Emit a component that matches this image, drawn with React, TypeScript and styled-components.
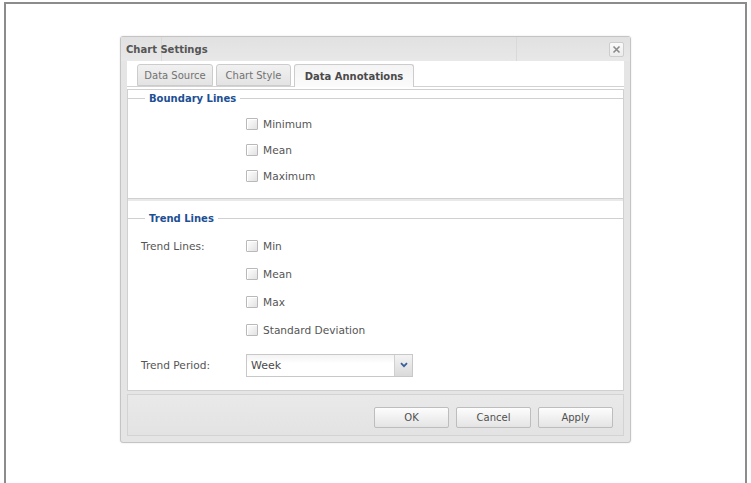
import styled, { createGlobalStyle } from 'styled-components';

const GlobalStyle = createGlobalStyle`
  html, body {
    margin: 0;
    padding: 0;
    background: #fff;
  }
  * {
    box-sizing: border-box;
  }
  body {
    font-family: 'DejaVu Sans', 'Liberation Sans', sans-serif;
    color: #4a4a4a;
  }
`;

const Frame = styled.div`
  margin: 2px 4px 0;
  height: 481px;
  border: 2px solid #8c8c8c;
  border-bottom: 0;
  display: flex;
  justify-content: center;
  align-items: flex-start;
  padding-top: 32px;
`;

const Dialog = styled.div`
  width: 511px;
  border: 1px solid #c4c4c4;
  border-radius: 3px;
  background: #e5e5e5;
  box-shadow: 0 0 2px rgba(0, 0, 0, 0.12);
  padding: 0 6px 6px 6px;
  display: flex;
  flex-direction: column;
`;

const Header = styled.div`
  height: 24px;
  margin: 0 -6px;
  padding: 0 6px 0 5px;
  display: flex;
  align-items: center;
  justify-content: space-between;
  background:
    linear-gradient(#d9d9d9, #d9d9d9) 40px 0 / 1px 100% no-repeat,
    linear-gradient(#d9d9d9, #d9d9d9) 395px 0 / 1px 100% no-repeat,
    linear-gradient(#e1e1e1, #e8e8e8);
`;

const Title = styled.span`
  font-size: 10px;
  font-weight: bold;
  color: #555;
`;

const CloseButton = styled.button`
  width: 15px;
  height: 15px;
  padding: 0;
  margin-top: 1px;
  border: 1px solid #cdcdcd;
  border-radius: 2px;
  background: linear-gradient(#fafafa, #ececec);
  display: flex;
  align-items: center;
  justify-content: center;
`;

const TabStrip = styled.div`
  height: 26px;
  padding: 2px 0 0 10px;
  background: #fff;
  border-bottom: 1px solid #d2d2d2;
  display: flex;
  align-items: flex-end;
  gap: 3px;
`;

const Tab = styled.div<{ $active?: boolean; $w: number }>`
  width: ${(p) => p.$w}px;
  height: ${(p) => (p.$active ? '23px' : '22px')};
  margin-bottom: ${(p) => (p.$active ? '-1px' : '0')};
  border: 1px solid #cccccc;
  border-bottom: ${(p) => (p.$active ? '0' : '1px solid #cccccc')};
  border-radius: 3px 3px 0 0;
  background: ${(p) =>
    p.$active
      ? 'linear-gradient(#f4f4f4, #fbfbfb)'
      : 'linear-gradient(#f1f1f1, #e3e3e3)'};
  font-size: 10px;
  font-weight: ${(p) => (p.$active ? 'bold' : 'normal')};
  color: ${(p) => (p.$active ? '#4a4a4a' : '#727272')};
  display: flex;
  align-items: center;
  justify-content: center;
`;

const StripSpacer = styled.div`
  height: 2px;
  background: #fff;
`;

const Panel = styled.div`
  height: 302px;
  background: #fff;
  border: 1px solid #d0d0d0;
  display: flex;
  flex-direction: column;
`;

const Group = styled.div<{ $closed?: boolean }>`
  padding-top: 1px;
  padding-bottom: ${(p) => (p.$closed ? '9px' : '0')};
  margin-top: ${(p) => (p.$closed ? '0' : '11px')};
  border-bottom: ${(p) => (p.$closed ? '1px solid #d0d0d0' : '0')};
  box-shadow: ${(p) => (p.$closed ? '0 2px 0 #e9e9e9' : 'none')};
`;

const GroupTitle = styled.div`
  height: 14px;
  display: flex;
  align-items: center;
  font-size: 10px;
  font-weight: bold;
  color: #1d4f94;

  &::before,
  &::after {
    content: '';
    height: 1px;
    background: #d0d0d0;
  }
  &::before {
    width: 17px;
  }
  &::after {
    flex: 1;
  }

  span {
    padding: 0 4px;
  }
`;

const Rows = styled.div<{ $top: number }>`
  margin-top: ${(p) => p.$top}px;
`;

const FormRow = styled.div<{ $h: number }>`
  height: ${(p) => p.$h}px;
  padding-left: 13px;
  display: grid;
  grid-template-columns: 105px auto;
  align-items: center;
`;

const FieldLabel = styled.span`
  font-size: 10.6px;
  color: #555;
`;

const CheckItem = styled.label`
  display: flex;
  align-items: center;
  gap: 5px;
  font-size: 10.6px;
  color: #555;
`;

const CheckBox = styled.span`
  width: 12px;
  height: 12px;
  border: 1px solid #b9b9b9;
  border-radius: 1px;
  background: linear-gradient(135deg, #ffffff, #e2e2e2);
  box-shadow: inset 1px 1px 0 #fff;
`;

const Combo = styled.div`
  width: 167px;
  height: 23px;
  border: 1px solid #c8c8c8;
  background: linear-gradient(#f3f3f3, #ffffff 40%);
  display: flex;
  align-items: stretch;
`;

const ComboText = styled.span`
  flex: 1;
  padding-left: 4px;
  font-size: 11px;
  color: #4a4a4a;
  display: flex;
  align-items: center;
`;

const ComboTrigger = styled.span`
  width: 18px;
  border-left: 1px solid #d0d0d0;
  background: linear-gradient(#f3f3f3, #dadada);
  display: flex;
  align-items: center;
  justify-content: center;
`;

const Footer = styled.div`
  margin-top: 3px;
  height: 42px;
  border: 1px solid #d3d3d3;
  background: linear-gradient(#e9e9e9, #e3e3e3);
  padding: 12px 10px 0 0;
  display: flex;
  justify-content: flex-end;
  align-items: flex-start;
  gap: 7px;
`;

const Button = styled.button`
  width: 75px;
  height: 21px;
  border: 1px solid #bdbdbd;
  border-radius: 2px;
  background: linear-gradient(#fdfdfd, #e4e4e4);
  font-family: 'DejaVu Sans', 'Liberation Sans', sans-serif;
  font-size: 10px;
  color: #505050;
  padding: 0;
`;

function Check({ label }: { label: string }) {
  return (
    <CheckItem>
      <CheckBox />
      {label}
    </CheckItem>
  );
}

export default function App() {
  const boundary = ['Minimum', 'Mean', 'Maximum'];
  const trend = ['Min', 'Mean', 'Max', 'Standard Deviation'];

  return (
    <>
      <GlobalStyle />
      <Frame>
        <Dialog>
          <Header>
            <Title>Chart Settings</Title>
            <CloseButton aria-label="Close">
              <svg width="9" height="9" viewBox="0 0 9 9">
                <path d="M1.5 1.5 L7.5 7.5 M7.5 1.5 L1.5 7.5" stroke="#8a8a8a" strokeWidth="1.6" />
              </svg>
            </CloseButton>
          </Header>
          <TabStrip>
            <Tab $w={76}>Data Source</Tab>
            <Tab $w={75}>Chart Style</Tab>
            <Tab $w={120} $active>
              Data Annotations
            </Tab>
          </TabStrip>
          <StripSpacer />
          <Panel>
            <Group $closed>
              <GroupTitle>
                <span>Boundary Lines</span>
              </GroupTitle>
              <Rows $top={6}>
                {boundary.map((b) => (
                  <FormRow $h={26} key={b}>
                    <span />
                    <Check label={b} />
                  </FormRow>
                ))}
              </Rows>
            </Group>
            <Group>
              <GroupTitle>
                <span>Trend Lines</span>
              </GroupTitle>
              <Rows $top={7}>
                {trend.map((t, i) => (
                  <FormRow $h={28} key={t}>
                    {i === 0 ? <FieldLabel>Trend Lines:</FieldLabel> : <span />}
                    <Check label={t} />
                  </FormRow>
                ))}
              </Rows>
              <Rows $top={8}>
                <FormRow $h={26}>
                  <FieldLabel>Trend Period:</FieldLabel>
                  <Combo>
                    <ComboText>Week</ComboText>
                    <ComboTrigger>
                      <svg width="8" height="6" viewBox="0 0 8 6">
                        <path d="M1 1.2 L4 4.2 L7 1.2" stroke="#3b5f9a" strokeWidth="1.8" fill="none" />
                      </svg>
                    </ComboTrigger>
                  </Combo>
                </FormRow>
              </Rows>
            </Group>
          </Panel>
          <Footer>
            <Button>OK</Button>
            <Button>Cancel</Button>
            <Button>Apply</Button>
          </Footer>
        </Dialog>
      </Frame>
    </>
  );
}
